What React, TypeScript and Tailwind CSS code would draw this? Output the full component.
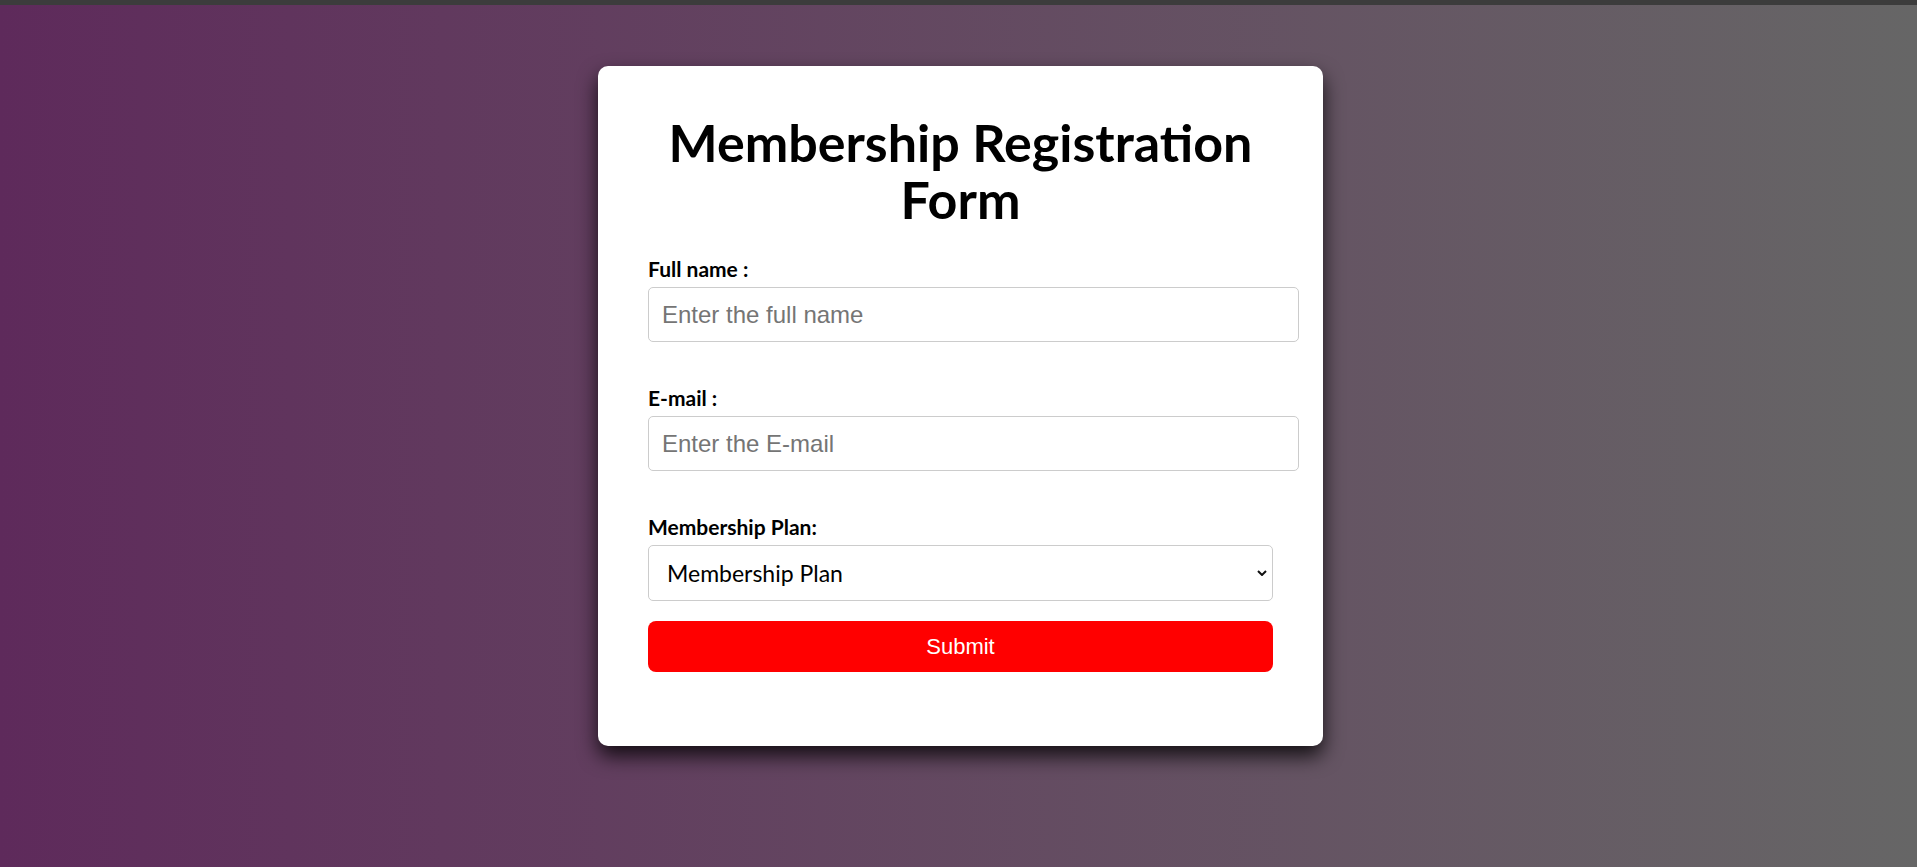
import { type FormEvent, useState } from "react";

const Field = ({
  label,
  type,
  placeholder,
}: {
  label: string;
  type: string;
  placeholder: string;
}) => (
  <div className="flex flex-col">
    <label className="h-[22px] text-[21px] leading-[22px] font-bold text-black">
      {label}
    </label>
    <input
      type={type}
      placeholder={placeholder}
      className="mt-[7px] h-[55px] w-[651px] rounded-[5px] border border-[#cccccc] bg-white px-[13px] font-['Liberation_Sans',Arial,sans-serif] text-[24px] text-black outline-none placeholder:text-[#757575]"
    />
  </div>
);

const App = () => {
  const [plan, setPlan] = useState("");

  const handleSubmit = (evt: FormEvent<HTMLFormElement>) => {
    evt.preventDefault();
  };

  return (
    <div className="flex min-h-[867px] flex-col bg-gradient-to-r from-[#5e2a5b] to-[#666666] font-['Lato',sans-serif]">
      <div className="h-[5px] bg-[#3c3c3c]" />

      <div className="flex justify-center pt-[61px] pl-[4px]">
        <form
          onSubmit={handleSubmit}
          className="w-[725px] rounded-[10px] bg-white px-[50px] pt-[48px] pb-[74px] shadow-[0_10px_20px_rgba(0,0,0,0.8)]"
        >
          <h1 className="text-center text-[52px] leading-[57px] font-bold text-black">
            Membership Registration
            <br />
            Form
          </h1>

          <div className="mt-[30px] flex flex-col gap-[45px]">
            <Field label="Full name :" type="text" placeholder="Enter the full name" />
            <Field label="E-mail :" type="email" placeholder="Enter the E-mail" />
          </div>

          <div className="mt-[45px] flex flex-col">
            <label className="h-[22px] text-[21px] leading-[22px] font-bold text-black">
              Membership Plan:
            </label>
            <div className="relative mt-[7px]">
              <select
                value={plan}
                onChange={(e) => setPlan(e.target.value)}
                className="h-[56px] w-full appearance-none rounded-[5px] border border-[#cccccc] bg-white pl-[18px] text-[23px] text-black outline-none"
              >
                <option value="">Membership Plan</option>
                <option value="basic">Basic</option>
                <option value="premium">Premium</option>
              </select>
              <svg
                viewBox="0 0 10 6"
                className="pointer-events-none absolute top-[25px] right-[6px] h-[6px] w-[10px]"
                fill="none"
                stroke="#111"
                strokeWidth="2"
              >
                <path d="M1 1l4 4 4-4" />
              </svg>
            </div>
          </div>

          <button
            type="submit"
            className="mt-[20px] h-[51px] w-full rounded-[8px] bg-[#ff0000] font-['Liberation_Sans',Arial,sans-serif] text-[22px] text-white"
          >
            Submit
          </button>
        </form>
      </div>
    </div>
  );
};

export default App;
